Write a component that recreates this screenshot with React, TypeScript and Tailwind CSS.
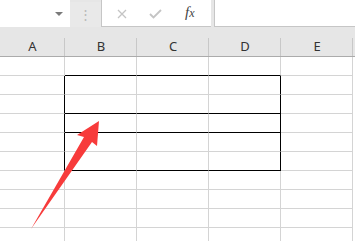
import React from 'react';

const cols = ['A', 'B', 'C', 'D', 'E'];
const widths = ['w-[65px]', 'w-[72px]', 'w-[72px]', 'w-[72px]', 'w-[72px]'];

// which cells get the black outline (row index, col index)
const blackBottom = (r: number, c: number) => [0, 2, 3, 5].includes(r) && c >= 1 && c <= 3;
const blackRight = (r: number, c: number) => r >= 1 && r <= 5 && (c === 0 || c === 3);

const FormulaBar: React.FC = () => (
  <div className="flex h-[27px] bg-[#e6e6e6]">
    <div className="w-[70px] h-full bg-white flex items-center justify-end pr-[7px]">
      <div className="w-0 h-0 border-l-[4px] border-r-[4px] border-t-[4px] border-l-transparent border-r-transparent border-t-[#7a7a7a]" />
    </div>
    <div className="w-[31px] mt-[2px] bg-[#e9e9e9] flex items-center justify-center text-[#b8b8b8] text-[13px] leading-none">
      ⋮
    </div>
    <div className="w-[110px] h-[27px] bg-white border-l border-b border-[#c6c6c6] relative text-[#c4c4c4]">
      <svg className="absolute left-[15px] top-[9px]" width="10" height="10" viewBox="0 0 10 10">
        <path d="M1 1L9 9M9 1L1 9" stroke="#c4c4c4" strokeWidth="1.3" />
      </svg>
      <svg className="absolute left-[47px] top-[9px]" width="13" height="10" viewBox="0 0 13 10">
        <path d="M1 5L4.5 8.5L12 1" stroke="#c4c4c4" strokeWidth="1.8" fill="none" />
      </svg>
      <span className="absolute left-[83px] top-[5px] text-[15px] italic text-[#444] font-['Liberation_Serif',serif] leading-none">
        f<span className="text-[12px]">x</span>
      </span>
    </div>
    <div className="w-[3px]" />
    <div className="flex-1 h-[27px] bg-white border-l border-b border-[#c6c6c6]" />
  </div>
);

const App: React.FC = () => {
  const rows = Array.from({ length: 10 }, (_, i) => i);
  return (
    <div className="w-[355px] h-[241px] overflow-hidden bg-white relative font-['Noto_Sans',sans-serif]">
      <FormulaBar />
      <div className="h-[10px] bg-[#e6e6e6]" />
      <div className="flex h-[20px] bg-[#e6e6e6] border-b border-[#ababab]">
        {cols.map((c, i) => (
          <div key={c} className={`${widths[i]} shrink-0 relative flex items-center justify-center text-[13px] text-[#333] leading-none`}>
            <span className="-mt-[1px]">{c}</span>
            <div className="absolute right-0 top-[1px] bottom-0 w-px bg-[#c8c8c8]" />
          </div>
        ))}
      </div>
      {rows.map((r) => (
        <div key={r} className="flex h-[19px]">
          {cols.map((c, i) => (
            <div
              key={c}
              className={`${widths[i]} shrink-0 border-b border-r ${blackBottom(r, i) ? 'border-b-black' : 'border-b-[#d4d4d4]'} ${blackRight(r, i) ? 'border-r-black' : 'border-r-[#d4d4d4]'}`}
            />
          ))}
        </div>
      ))}
      <svg className="absolute left-0 top-0 pointer-events-none" width="355" height="241" viewBox="0 0 355 241">
        <polygon points="99,121 77,135 84,137 31,229 92,142 97,146" fill="#f73b3b" />
      </svg>
    </div>
  );
};

export default App;
